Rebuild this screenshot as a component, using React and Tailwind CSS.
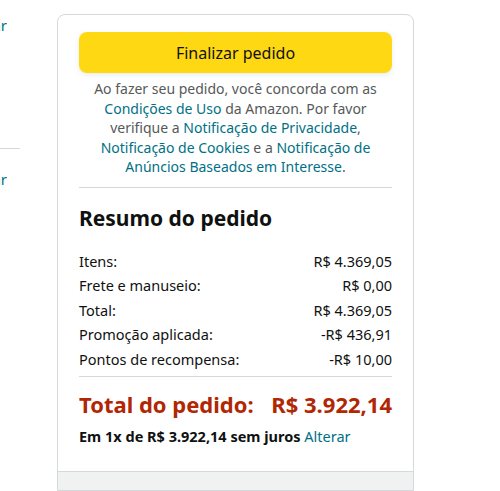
export default function App() {
  const rows = [
    ["Itens:", "R$ 4.369,05"],
    ["Frete e manuseio:", "R$ 0,00"],
    ["Total:", "R$ 4.369,05"],
    ["Promoção aplicada:", "-R$ 436,91"],
    ["Pontos de recompensa:", "-R$ 10,00"],
  ]
  return (
    <div className="flex h-[491px] w-[500px] overflow-hidden bg-white text-[#0f1111]" style={{ fontFamily: '"Noto Sans", Arial, sans-serif' }}>
      {/* left column, cut off */}
      <div className="w-[20px] shrink-0">
        <div className="mt-[14px] flex w-[7px] justify-end overflow-hidden whitespace-nowrap text-[15px] leading-[22px] text-[#007185]">
          <span>Alterar</span>
        </div>
        <div className="mt-[112px] border-t border-[#d5d9d9]" />
        <div className="mt-[19px] flex w-[7px] justify-end overflow-hidden whitespace-nowrap text-[15px] leading-[22px] text-[#007185]">
          <span>Alterar</span>
        </div>
      </div>

      {/* order summary card */}
      <div className="ml-[37px] mt-[14px] flex w-[357px] shrink-0 flex-col overflow-hidden rounded-t-[8px] border border-[#d5d9d9]">
        <div className="px-[21px] pt-[17px]">
          <button className="flex h-[41px] w-full items-center justify-center rounded-[8px] bg-[#ffd814] text-[16px] shadow-[0_2px_5px_0_rgba(213,217,217,0.5)]">
            Finalizar pedido
          </button>
          <p className="mt-[6px] text-center text-[14px] leading-[19.6px] text-[#565959]">
            Ao fazer seu pedido, você concorda com as <span className="text-[#007185]">Condições de Uso</span> da
            Amazon. Por favor verifique a <span className="text-[#007185]">Notificação de Privacidade</span>,{" "}
            <span className="text-[#007185]">Notificação de Cookies</span> e a{" "}
            <span className="text-[#007185]">Notificação de Anúncios Baseados em Interesse</span>.
          </p>
          <div className="mt-[10px] border-t border-[#d5d9d9]" />

          <h2 className="mt-[16px] text-[21px] font-bold leading-[28px]">Resumo do pedido</h2>

          <div className="mt-[17px] flex flex-col">
            {rows.map(([label, value]) => (
              <div key={label} className="flex justify-between text-[14.5px] leading-[24.5px]">
                <span>{label}</span>
                <span>{value}</span>
              </div>
            ))}
          </div>

          <div className="mt-[5px] border-t border-[#d5d9d9]" />

          <div className="mt-[12px] flex justify-between text-[22px] font-bold leading-[30px] text-[#b12704]">
            <span>Total do pedido:</span>
            <span>R$ 3.922,14</span>
          </div>

          <p className="mt-[7px] text-[14.5px] leading-[20px]">
            <span className="font-bold">Em 1x de R$ 3.922,14 sem juros</span>{" "}
            <span className="text-[#007185]">Alterar</span>
          </p>
        </div>

        <div className="mt-[25px] flex-1 border-t border-[#d5d9d9] bg-[#f0f2f2]" />
      </div>
    </div>
  )
}
